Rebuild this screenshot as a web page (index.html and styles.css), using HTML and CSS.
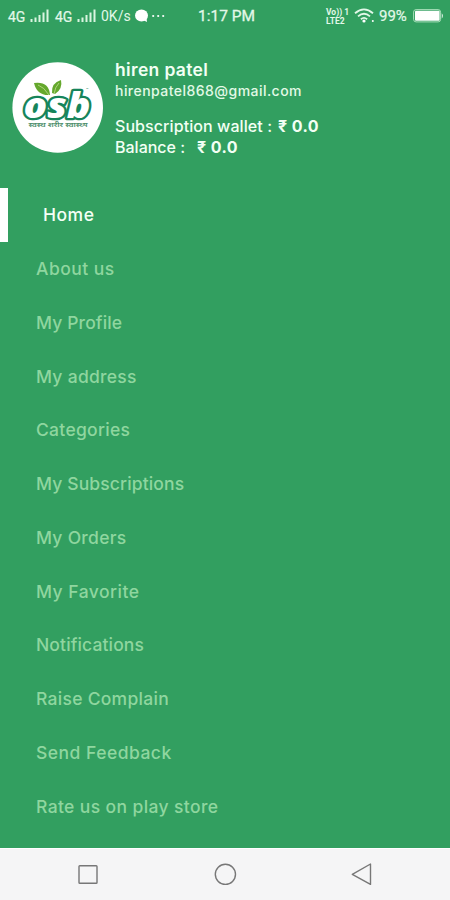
FILE: index.html
```html
<!DOCTYPE html>
<html lang="en">
<head>
<meta charset="utf-8">
<meta name="viewport" content="width=device-width, initial-scale=1">
<title>Menu</title>
<link rel="stylesheet" href="styles.css">
</head>
<body>
<div class="screen">
  <header class="status">
    <div class="status-left">
      <span class="net">4G</span>
      <svg class="bars" width="19" height="14" viewBox="0 0 19 14"><path d="M1.5 10v3M5.5 8.5v4.5M9.5 6v7M13.5 3.5v9.5M17.5 .5v12.5" /></svg>
      <span class="net second">4G</span>
      <svg class="bars" width="19" height="14" viewBox="0 0 19 14"><path d="M1.5 10v3M5.5 8.5v4.5M9.5 6v7M13.5 3.5v9.5M17.5 .5v12.5" /></svg>
      <span class="speed">0K/s</span>
      <svg class="chat" width="30" height="14" viewBox="0 0 30 14"><ellipse cx="6.5" cy="6.5" rx="6.5" ry="6"/><path d="M8 11l4 2-.5-4z"/><circle cx="18.2" cy="7" r="1.1"/><circle cx="23.2" cy="7" r="1.1"/><circle cx="28.2" cy="7" r="1.1"/></svg>
    </div>
    <span class="clock">1:17 PM</span>
    <div class="status-right">
      <span class="lte"><span>Vo)) 1</span><span class="lte-slot">LTE2</span></span>
      <svg class="wifi" width="21" height="16" viewBox="0 0 21 16"><path d="M1 5.2q9-7.6 18 0M4 8.4q6-5.2 12 0M6.9 11.2q3.1-2.7 6.2 0"/><circle cx="10" cy="13" r="1.6"/><circle cx="18.8" cy="12.9" r="1"/></svg>
      <span class="percent">99%</span>
      <svg class="battery" width="31" height="14" viewBox="0 0 31 14"><rect x=".6" y=".6" width="27" height="12.3" rx="2.5" class="shell"/><rect x="2" y="1.7" width="24.6" height="10.1" rx="1"/><path d="M28.8 4.2q2 2.6 0 5.2z"/></svg>
    </div>
  </header>

  <section class="profile">
    <svg class="avatar" width="92" height="92" viewBox="0 0 92 92">
      <circle cx="45.7" cy="45.5" r="45.3" fill="#fff"/>
      <g class="leaves">
        <path d="M38 33Q25 34 22 21Q37 19 38 33Z"/>
        <path d="M40 31Q39 21 49 18Q51 27 43 32Z"/>
        <path d="M37 33Q32 25 26 23M42 32Q43 25 47 21" class="vein"/>
      </g>
      <text x="11.5" y="55.5" class="wordmark" textLength="67" lengthAdjust="spacingAndGlyphs">osb</text>
      <text x="16.5" y="65" class="tagline" textLength="59" lengthAdjust="spacingAndGlyphs">स्वस्थ शरीर स्वास्थ्य</text>
      <text x="74" y="29" class="tm">™</text>
    </svg>
    <div class="details">
      <div class="name">hiren patel</div>
      <div class="email">hirenpatel868@gmail.com</div>
      <div class="wallet"><span class="wallet-label">Subscription wallet :</span><b>₹ 0.0</b></div>
      <div class="wallet"><span class="balance-label">Balance :</span><b>₹ 0.0</b></div>
    </div>
  </section>

  <nav class="menu">
    <a class="item active">Home</a>
    <a class="item loose">About us</a>
    <a class="item tight">My Profile</a>
    <a class="item">My address</a>
    <a class="item">Categories</a>
    <a class="item tight">My Subscriptions</a>
    <a class="item">My Orders</a>
    <a class="item loose">My Favorite</a>
    <a class="item tight">Notifications</a>
    <a class="item">Raise Complain</a>
    <a class="item loose">Send Feedback</a>
    <a class="item roomy">Rate us on play store</a>
  </nav>

  <footer class="navbar">
    <svg width="24" height="24" viewBox="0 0 24 24"><rect x="3" y="2.7" width="18" height="17.5" rx=".8"/></svg>
    <svg width="24" height="24" viewBox="0 0 24 24"><circle cx="12.4" cy="11.3" r="10.1"/></svg>
    <svg width="24" height="24" viewBox="0 0 24 24"><path d="M20.5 1v20.4L2.3 11.3z"/></svg>
  </footer>
</div>
</body>
</html>
```
FILE: styles.css
```css
* { box-sizing: border-box; }
body { margin: 0; background: #329f60; }
.screen {
  width: 450px;
  height: 900px;
  display: flex;
  flex-direction: column;
  overflow: hidden;
  background: #329f60;
  color: #f2fff4;
  font-family: Inter, "Noto Sans", sans-serif;
}

.status {
  height: 32px;
  display: grid;
  grid-template-columns: 190px 72px 1fr;
  align-items: center;
  padding: 0 6px 0 8px;
  font-family: Roboto, sans-serif;
  color: #e2f8e8;
}
.status-left, .status-right { display: flex; align-items: center; }
.status-right { justify-content: flex-end; }
.status svg { flex: none; fill: #fff; }
.net { width: 22px; font-size: 14px; padding-top: 2px; -webkit-text-stroke: .2px; }
.net.second { margin-left: 6px; }
.bars path { stroke: #d9f5e0; stroke-width: 2; fill: none; }
.speed { width: 32px; margin-left: 5px; font-size: 14px; white-space: nowrap; }
.chat { margin-left: 2px; }
.clock { font-size: 15.5px; white-space: nowrap; -webkit-text-stroke: .3px; }
.lte { display: flex; flex-direction: column; font-size: 8.5px; line-height: 8px; font-weight: 700; width: 24px; white-space: nowrap; }
.lte-slot { margin-top: 1px; }
.wifi { margin-left: 4px; }
.wifi path { fill: none; stroke: #e2f8e8; stroke-width: 1.8; }
.percent { width: 30px; margin: 0 4px 0 4px; font-size: 15px; -webkit-text-stroke: .2px; }
.battery .shell { fill: none; stroke: #a9dfba; stroke-width: 1; }

.profile { height: 156px; display: flex; padding: 30px 0 0 12px; }
.avatar { flex: none; }
.leaves { fill: #65a82d; }
.vein { fill: none; stroke: #c2df91; stroke-width: .8; }
.wordmark {
  font: italic 800 36px "Open Sans", sans-serif;
  fill: #fff;
  stroke: #16845a;
  stroke-width: 4.6px;
  stroke-linejoin: round;
  paint-order: stroke;
}
.tagline { font: italic 600 5.5px "Noto Sans", sans-serif; fill: #4b8d69; }
.tm { font: 4px Roboto, sans-serif; fill: #16845a; }
.details { margin-left: 11px; white-space: nowrap; }
.name { height: 18px; line-height: 15px; font-size: 17.5px; font-weight: 600; letter-spacing: .35px; }
.email { height: 36px; line-height: 22px; font-size: 14px; font-weight: 500; letter-spacing: .46px; color: #e2f9e6; }
.wallet { display: flex; height: 21px; line-height: 21px; font-size: 16px; font-weight: 500; }
.wallet-label { width: 163px; letter-spacing: .08px; }
.balance-label { width: 82px; }
.wallet b { font-weight: 700; letter-spacing: .4px; }

.menu { flex: 1; }
.item {
  display: flex;
  align-items: center;
  height: 53.75px;
  padding-left: 36px;
  font-size: 17.5px;
  font-weight: 500;
  letter-spacing: .28px;
  color: #8fd69f;
}
.item.tight { letter-spacing: .13px; }
.item.loose { letter-spacing: .48px; }
.item.roomy { letter-spacing: .38px; }
.item.active { border-left: 8px solid #fff; padding-left: 35px; color: #f5fff6; letter-spacing: .5px; }

.navbar {
  height: 52px;
  display: flex;
  justify-content: space-between;
  align-items: center;
  padding: 0 76px;
  background: #f5f5f6;
  border-top: 1px solid #fff;
}
.navbar svg { fill: none; stroke: #777; stroke-width: 1.4; stroke-linejoin: round; }
```
